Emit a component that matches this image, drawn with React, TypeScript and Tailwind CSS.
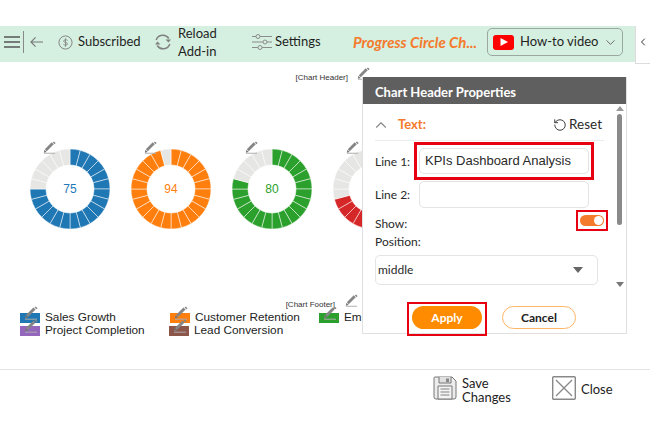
import { ChevronDown, ChevronLeft, ChevronUp, RotateCcw } from "lucide-react";

const FONT = "font-['Lato',sans-serif]";

function Pencil({ className }: { className: string }) {
  return (
    <svg viewBox="0 0 14 14" className={className} fill="none">
      <path d="M3 10 L10.5 2.5" stroke="#858585" strokeWidth="3" />
      <path d="M11.2 1 L13 2.8" stroke="#858585" strokeWidth="1.6" />
      <path d="M0.8 12.6 L1.6 9.4 L4 11.8 Z" fill="#777" />
      <path d="M1 13.2 H13" stroke="#aaa" strokeWidth="1" />
    </svg>
  );
}

function Donut({ value, color, label }: { value: number; color: string; label?: string }) {
  const filled = Math.round((value / 100) * 24);
  const point = (r: number, a: number) => {
    const t = ((a - 90) * Math.PI) / 180;
    return `${(40 + r * Math.cos(t)).toFixed(2)} ${(40 + r * Math.sin(t)).toFixed(2)}`;
  };
  return (
    <div className="relative w-[80px] h-[80px] shrink-0 flex items-center justify-center">
      <svg viewBox="0 0 80 80" className="absolute inset-0 w-[80px] h-[80px]">
        {Array.from({ length: 24 }).map((_, i) => {
          const a = i * 15;
          const b = a + 15;
          return (
            <path
              key={i}
              d={`M${point(40, a)} A40 40 0 0 1 ${point(40, b)} L${point(24, b)} A24 24 0 0 0 ${point(24, a)} Z`}
              fill={i < filled ? color : "#e6e6e4"}
              stroke="#fff"
              strokeWidth="0.5"
            />
          );
        })}
      </svg>
      <Pencil className="absolute left-[13px] top-[-8px] w-[13px] h-[13px]" />
      {label && (
        <span className="relative font-['Liberation_Sans',sans-serif] text-[12px]" style={{ color }}>
          {label}
        </span>
      )}
    </div>
  );
}

function LegendItem({ color, text, nudge }: { color: string; text: string; nudge?: boolean }) {
  return (
    <div className={`flex items-center h-[13px] ${nudge ? "ml-[-1px]" : ""}`}>
      <div className="relative w-[20px] h-[10px] shrink-0" style={{ background: color }}>
        <Pencil className="absolute left-[4px] top-[-7px] w-[14px] h-[14px]" />
      </div>
      <span className="ml-[5px] whitespace-nowrap">{text}</span>
    </div>
  );
}

export default function App() {
  return (
    <div className={`${FONT} w-[650px] h-[435px] bg-white overflow-hidden flex flex-col text-[#222]`}>
      <div className="h-[26px] shrink-0" />

      {/* toolbar */}
      <div className="flex h-[36px] shrink-0">
        <div className="w-[635px] bg-[#d5efe0] flex items-center pb-[4px] text-[13px] text-[#1f1f1f]">
          <svg viewBox="0 0 16 12" className="w-[16px] h-[12px] ml-[4px]" stroke="#555" strokeWidth="1.3">
            <path d="M0 1 H16 M0 6 H16 M0 11 H16" />
          </svg>
          <div className="w-px h-[22px] bg-[#888] ml-[3px]" />
          <svg viewBox="0 0 14 12" className="w-[13px] h-[12px] ml-[6px]" fill="none" stroke="#777" strokeWidth="1.2">
            <path d="M14 6 H1 M6 1 L1 6 L6 11" />
          </svg>
          <svg viewBox="0 0 16 16" className="w-[15px] h-[15px] ml-[15px]" fill="none" stroke="#808080" strokeWidth="1">
            <circle cx="8" cy="8" r="7" />
            <path d="M10.2 5.8 C9.4 4.6 6 4.8 6 6.6 C6 8.4 10.2 7.6 10.2 9.4 C10.2 11.2 6.6 11.2 5.8 10 M8 3.5 V12.5" strokeWidth="0.9" />
          </svg>
          <span className="ml-[5px] w-[75px] whitespace-nowrap">Subscribed</span>
          <svg viewBox="0 0 20 20" className="w-[20px] h-[20px]" fill="none" stroke="#808080" strokeWidth="1.5">
            <path d="M3.2 8 A7 7 0 0 1 15.8 6.5 M16.8 12 A7 7 0 0 1 4.2 13.5" />
            <path d="M12.5 7.5 H18 L18 7.5 L15.5 10.5 Z M7.5 12.5 H2 L4.5 9.5 Z" fill="#808080" stroke="none" />
          </svg>
          <div className="ml-[5px] w-[74px] leading-[18px]">
            Reload
            <br />
            Add-in
          </div>
          <svg viewBox="0 0 20 18" className="w-[20px] h-[18px]" fill="none" stroke="#8c8c8c" strokeWidth="1">
            <path d="M0 3.5 H4 M8 3.5 H20 M0 9 H11 M15 9 H20 M0 14.5 H6 M10 14.5 H20" />
            <circle cx="6" cy="3.5" r="2" />
            <circle cx="13" cy="9" r="2" />
            <circle cx="8" cy="14.5" r="2" />
          </svg>
          <span className="ml-[3px] w-[78px]">Settings</span>
          <span className="w-[134px] whitespace-nowrap italic font-bold text-[#f47a2c] text-[15px]">
            Progress Circle Ch...
          </span>
          <div className="w-[136px] h-[28px] border border-[#9aa8a0] rounded-[5px] flex items-center">
            <div className="ml-[5px] w-[21px] h-[15px] bg-[#f00] rounded-[3px] flex items-center justify-center">
              <svg viewBox="0 0 8 8" className="w-[8px] h-[8px]">
                <path d="M0.5 0 L8 4 L0.5 8 Z" fill="#fff" />
              </svg>
            </div>
            <span className="ml-[6px] whitespace-nowrap">How-to video</span>
            <ChevronDown className="w-[15px] h-[15px] ml-auto mr-[4px] text-[#666]" strokeWidth={1.5} />
          </div>
        </div>
        <div className="flex-1 h-[38px] border-b border-l border-[#dcdcdc] flex items-center justify-center pb-[6px]">
          <ChevronLeft className="w-[12px] h-[12px] text-[#333]" strokeWidth={2} />
        </div>
      </div>

      {/* chart canvas */}
      <div className="relative h-[308px] shrink-0 border-b border-[#e3e3e3]">
        <div className="flex justify-end items-center h-[11px] mt-[10px] mr-[283px] font-['Liberation_Sans',sans-serif] text-[8px] text-[#333]">
          [Chart Header]
          <Pencil className="w-[13px] h-[13px] ml-[9px] mr-[-3px] mt-[-8px]" />
        </div>

        <div className="flex gap-[21px] pl-[30px] mt-[66px]">
          <Donut value={75} color="#1f77b4" label="75" />
          <Donut value={94} color="#ff7f0e" label="94" />
          <Donut value={80} color="#2ca02c" label="80" />
          <Donut value={70} color="#d62728" />
        </div>

        <div className="flex justify-end items-center h-[11px] mt-[70px] mr-[292px] font-['Liberation_Sans',sans-serif] text-[8px] text-[#333]">
          [Chart Footer]
          <Pencil className="w-[13px] h-[13px] ml-[10px] mt-[-8px]" />
        </div>

        <div className="flex pl-[20px] mt-[1px] font-['Liberation_Sans',sans-serif] text-[11.8px] text-[#222] leading-[13px]">
          <div className="w-[150px] flex flex-col">
            <LegendItem color="#1f77b4" text="Sales Growth" />
            <LegendItem color="#9467bd" text="Project Completion" />
          </div>
          <div className="w-[149px] flex flex-col">
            <LegendItem color="#ff7f0e" text="Customer Retention" />
            <LegendItem color="#8c564b" text="Lead Conversion" nudge />
          </div>
          <div className="w-[43px] overflow-x-clip">
            <LegendItem color="#2ca02c" text="Employee Satisfaction" />
          </div>
        </div>

        {/* properties popup */}
        <div className="absolute left-[362px] top-[15px] w-[265px] h-[257px] bg-white border border-[#e0e0e0] border-t-0 flex flex-col text-[12px] text-[#2a2a2a]">
          <div className="h-[27px] shrink-0 bg-[#5f5f5f] flex items-center pl-[12px] pt-[4px] font-bold text-white text-[13px]">
            Chart Header Properties
          </div>
          <div className="relative flex-1 pl-[12px] pr-[22px]">
            <div className="flex items-center h-[37px] pt-[5px] border-b border-[#ececec]">
              <ChevronUp className="w-[18px] h-[18px] text-[#888] ml-[-3px]" strokeWidth={1.5} />
              <span className="ml-[8px] font-bold text-[13px] text-[#f47a2c]">Text:</span>
              <RotateCcw className="w-[14px] h-[14px] ml-auto text-[#333]" strokeWidth={1.6} />
              <span className="ml-[2px] mr-[2px] text-[13.5px] text-[#2a2a2a]">Reset</span>
            </div>

            <div className="flex items-center mt-[1px]">
              <span className="w-[39px] shrink-0 pt-[2px]">Line 1:</span>
              <div className="border-[3px] border-[#e60012] px-[2px] py-[3px] w-[180px]">
                <div className="h-[26px] border border-[#e4e4e4] rounded-[5px] flex items-center pl-[5px] font-['Liberation_Sans',sans-serif] text-[13px]">
                  KPIs Dashboard Analysis
                </div>
              </div>
            </div>
            <div className="flex items-center mt-[1px]">
              <span className="w-[44px] shrink-0">Line 2:</span>
              <div className="w-[170px] h-[27px] border border-[#e4e4e4] rounded-[5px]" />
            </div>

            <div className="flex items-center justify-between h-[23px] mt-[1px] mr-[-4px]">
              <span className="mt-[7px]">Show:</span>
              <div className="border-[2px] border-[#e60012] w-[32px] h-[21px] flex items-center justify-center">
                <div className="w-[24px] h-[11px] rounded-full bg-[#f47a2c] flex items-center justify-end pr-[1px]">
                  <div className="w-[9px] h-[9px] rounded-full bg-white" />
                </div>
              </div>
            </div>

            <div className="h-[19px] leading-[19px]">Position:</div>
            <div className="w-[223px] h-[30px] mt-[4px] border border-[#e4e4e4] rounded-[5px] flex items-center pl-[2px] pr-[14px]">
              middle
              <svg viewBox="0 0 10 6" className="w-[10px] h-[6px] ml-auto">
                <path d="M0 0 H10 L5 6 Z" fill="#666" />
              </svg>
            </div>

            <div className="flex items-start mt-[17px] ml-[32px]">
              <div className="border-[2px] border-[#e60012] px-[3px] pt-[2px] pb-[5px]">
                <div className="w-[70px] h-[23px] rounded-full bg-[#ff8c00] flex items-center justify-center font-bold text-white">
                  Apply
                </div>
              </div>
              <div className="ml-[15px] mt-[4px] w-[74px] h-[23px] rounded-full bg-white border border-[#ffb566] flex items-center justify-center font-bold text-[#222]">
                Cancel
              </div>
            </div>

            {/* scrollbar */}
            <div className="absolute right-[3px] top-[2px] bottom-[49px] w-[7px] flex flex-col items-center">
              <svg viewBox="0 0 8 5" className="w-[8px] h-[5px]">
                <path d="M0 5 H8 L4 0 Z" fill="#999" />
              </svg>
              <div className="w-[5px] h-[111px] mt-[3px] rounded-full bg-[#8a8a8a]" />
              <svg viewBox="0 0 8 5" className="w-[8px] h-[5px] mt-auto">
                <path d="M0 0 H8 L4 5 Z" fill="#777" />
              </svg>
            </div>
          </div>
        </div>
      </div>

      {/* bottom actions */}
      <div className="flex items-start pt-[6px] pl-[433px] text-[13px] text-[#222]">
        <svg viewBox="0 0 24 24" className="w-[24px] h-[24px]" fill="#ececec" stroke="#777" strokeWidth="1">
          <path d="M2 1 H19 L23 5 V21 Q23 23 21 23 H3 Q1 23 1 21 V2 Q1 1 2 1 Z" />
          <path d="M6 1 V7 H18 V1" fill="#e0e0e0" />
          <path d="M13 2.5 H16 V6 H13 Z" fill="#888" stroke="none" />
          <path d="M5 10 H19 V23 H5 Z" fill="#f4f4f4" />
          <path d="M7.5 13 H16.5 M7.5 16 H16.5 M7.5 19 H16.5" strokeWidth="0.9" />
        </svg>
        <div className="ml-[5px] w-[90px] leading-[14px]">
          Save
          <br />
          Changes
        </div>
        <svg viewBox="0 0 24 24" className="w-[24px] h-[24px]" fill="none" stroke="#888" strokeWidth="1.3">
          <rect x="0.7" y="0.7" width="22.6" height="22.6" rx="1" strokeWidth="1.4" />
          <path d="M4 4 L20 20 M20 4 L4 20" />
        </svg>
        <span className="ml-[5px] mt-[4px]">Close</span>
      </div>
    </div>
  );
}
